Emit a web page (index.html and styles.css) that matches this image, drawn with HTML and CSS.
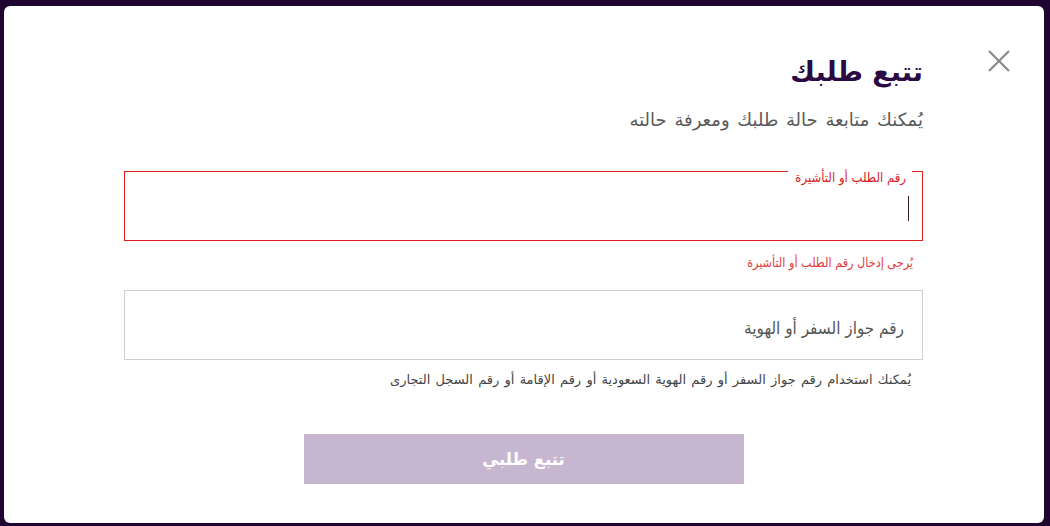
FILE: index.html
```html
<!DOCTYPE html>
<html lang="ar" dir="rtl">
<head>
    <meta charset="UTF-8">
    <meta name="viewport" content="width=device-width, initial-scale=1.0">
    <title>تتبع طلبك</title>
    <link rel="stylesheet" href="styles.css">
</head>
<body>
    <div class="modal">
        <button class="close" aria-label="إغلاق">
            <svg width="24" height="24" viewBox="0 0 24 24">
                <path d="M2 2 L22 22 M22 2 L2 22" stroke="#8a8a8a" stroke-width="2.2" fill="none"/>
            </svg>
        </button>

        <div class="content">
            <h2 class="title">تتبع طلبك</h2>
            <p class="subtitle">يُمكنك متابعة حالة طلبك ومعرفة حالته</p>

            <div class="field field-error">
                <span class="field-label">رقم الطلب أو التأشيرة</span>
                <span class="caret"></span>
            </div>
            <p class="error-text">يُرجى إدخال رقم الطلب أو التأشيرة</p>

            <div class="field">
                <span class="placeholder">رقم جواز السفر أو الهوية</span>
            </div>
            <p class="hint">يُمكنك استخدام رقم جواز السفر أو رقم الهوية السعودية أو رقم الإقامة أو رقم السجل التجارى</p>

            <button class="submit" disabled>تتبع طلبي</button>
        </div>
    </div>
</body>
</html>
```

FILE: styles.css
```css
html, body {
    margin: 0;
    height: 526px;
    overflow: hidden;
}

body {
    background-color: #1e0630;
    font-family: "DejaVu Sans", sans-serif;
    display: flex;
    padding: 6px 6px 3px 4px;
    box-sizing: border-box;
}

.modal {
    position: relative;
    flex: 1;
    background-color: #fff;
    border-radius: 6px;
}

.close {
    position: absolute;
    top: 43px;
    left: 983px;
    padding: 0;
    border: none;
    background: none;
    cursor: pointer;
}

.content {
    padding: 46px 121px 0 120px;
    display: flex;
    flex-direction: column;
}

.title {
    margin: 0;
    font-size: 27px;
    line-height: 40px;
    font-weight: bold;
    color: #2b0a44;
}

.subtitle {
    margin: 15px 0 0;
    font-size: 18px;
    line-height: 26px;
    word-spacing: 2px;
    color: #5a5a5a;
}

.field {
    position: relative;
    height: 70px;
    border: 1px solid #cfcfcf;
    box-sizing: border-box;
    display: flex;
    align-items: center;
    padding: 0 18px;
}

.field-error {
    margin-top: 38px;
    border-color: #d91f1f;
}

.field-label {
    position: absolute;
    top: -3px;
    right: 10px;
    padding: 0 6px 0 7px;
    background-color: #fff;
    font-family: "DejaVu Sans Condensed", "DejaVu Sans", sans-serif;
    font-size: 13px;
    line-height: 18px;
    color: #d91f1f;
}

.caret {
    width: 1px;
    height: 25px;
    margin-top: 4px;
    margin-right: -5px;
    background-color: #3a1a2a;
}

.error-text {
    margin: 13px 10px 0 0;
    font-family: "DejaVu Sans Condensed", "DejaVu Sans", sans-serif;
    font-size: 12.5px;
    line-height: 18px;
    color: #e03a3a;
}

.field-error + .error-text + .field {
    margin-top: 18px;
}

.placeholder {
    font-family: "DejaVu Sans Condensed", "DejaVu Sans", sans-serif;
    font-size: 17px;
    color: #555;
    margin-top: 5px;
}

.hint {
    margin: 11px 12px 0 0;
    font-size: 13px;
    line-height: 18px;
    word-spacing: 1.1px;
    color: #444;
}

.submit {
    align-self: center;
    width: 440px;
    height: 50px;
    margin-top: 45px;
    border: none;
    background-color: #c6b6cf;
    color: #fff;
    font-family: "DejaVu Sans", sans-serif;
    font-size: 16.5px;
    font-weight: bold;
}
```
